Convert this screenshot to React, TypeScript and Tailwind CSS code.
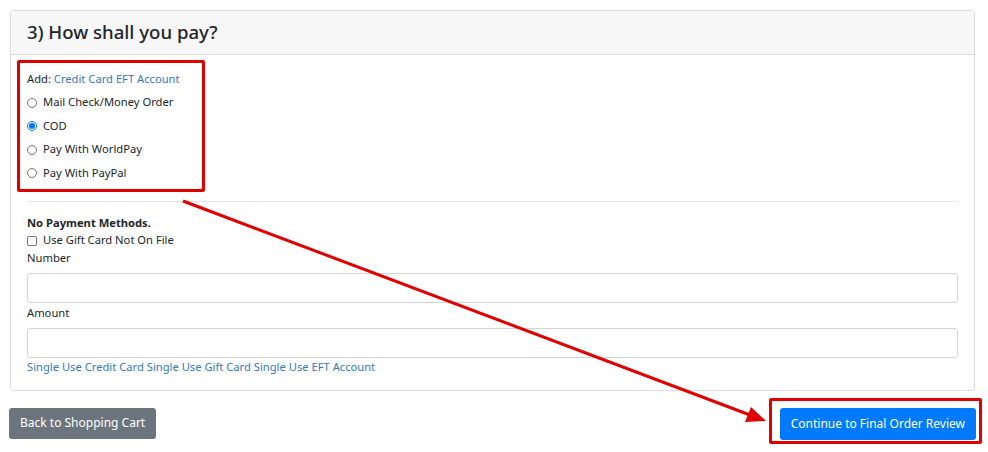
import React from 'react'

const methods = [
  { label: 'Mail Check/Money Order', checked: false },
  { label: 'COD', checked: true },
  { label: 'Pay With WorldPay', checked: false },
  { label: 'Pay With PayPal', checked: false },
]

function Radio({ checked }: { checked: boolean }) {
  return (
    <span
      className={`w-[10px] h-[10px] rounded-full border shrink-0 bg-white flex items-center justify-center ${
        checked ? 'border-[#0075ff]' : 'border-[#767676]'
      }`}
    >
      {checked && <span className="block w-[6px] h-[6px] rounded-full bg-[#0075ff]" />}
    </span>
  )
}

export default function App() {
  return (
    <div
      className="relative w-[988px] h-[452px] bg-white text-[#212529] text-[11.2px] overflow-hidden"
      style={{ fontFamily: '"Noto Sans", "Open Sans", sans-serif' }}
    >
      <div className="pt-[10px] pl-[10px] pr-[13px]">
        {/* Card */}
        <div className="border border-[#dcdcdc] rounded-[3px]">
          <div className="h-[44px] bg-[#f7f7f7] border-b border-[#dcdcdc] px-[16px] flex items-center">
            <h4 className="text-[18.6px] font-medium leading-none">3) How shall you pay?</h4>
          </div>

          <div className="px-[16px] pt-[5px] pb-[14px]">
            {/* highlighted payment options */}
            <div className="-ml-[10px] w-[188px] h-[132px] border-[3px] border-[#e10000] rounded-[2px] pl-[7px] pt-[4px]">
              <div className="h-[24px] flex items-center">
                <span>Add:&nbsp;</span>
                <a className="text-[#337ab7]">Credit Card</a>
                <span>&nbsp;</span>
                <a className="text-[#337ab7]">EFT Account</a>
              </div>
              {methods.map((m) => (
                <div key={m.label} className="h-[23.5px] flex items-center gap-[6px]">
                  <Radio checked={m.checked} />
                  <span>{m.label}</span>
                </div>
              ))}
            </div>

            <div className="mt-[9px] border-t border-[#e5e5e5]" />

            <div className="pt-[13px]">
              <div className="font-bold h-[17px] flex items-center">No Payment Methods.</div>
              <div className="h-[17px] flex items-center gap-[6px]">
                <span className="inline-block w-[10px] h-[10px] border border-[#767676] rounded-[2px]" />
                <span>Use Gift Card Not On File</span>
              </div>
              <div className="h-[18px] flex items-center">Number</div>
              <div className="mt-[6px] h-[30px] border border-[#d4d4d4] rounded-[3px]" />
              <div className="h-[21px] flex items-center">Amount</div>
              <div className="mt-[4px] h-[30px] border border-[#d4d4d4] rounded-[3px]" />
              <div className="h-[18px] flex items-center text-[#337ab7]">
                <a>Single Use Credit Card</a>
                <span>&nbsp;</span>
                <a>Single Use Gift Card</a>
                <span>&nbsp;</span>
                <a>Single Use EFT Account</a>
              </div>
            </div>
          </div>
        </div>

        {/* Actions */}
        <div className="mt-[7px] flex items-center justify-between">
          <button className="-ml-[1px] mt-[4px] h-[31px] px-[11px] bg-[#6c757d] text-white text-[12px] rounded-[3px]">
            Back to Shopping Cart
          </button>
          <div className="-mr-[7px] border-[3px] border-[#e10000] rounded-[2px] pt-[7px] pb-[1px] pl-[8px] pr-[3px]">
            <button className="h-[32px] px-[11px] bg-[#007bff] text-white text-[12px] rounded-[3px]">
              Continue to Final Order Review
            </button>
          </div>
        </div>
      </div>

      {/* Annotation arrow */}
      <svg className="absolute inset-0 pointer-events-none" width="988" height="452">
        <line x1="183" y1="201" x2="750" y2="415" stroke="#e10000" strokeWidth="3" />
        <polygon points="766,421 745,422 751,407" fill="#e10000" />
      </svg>
    </div>
  )
}
